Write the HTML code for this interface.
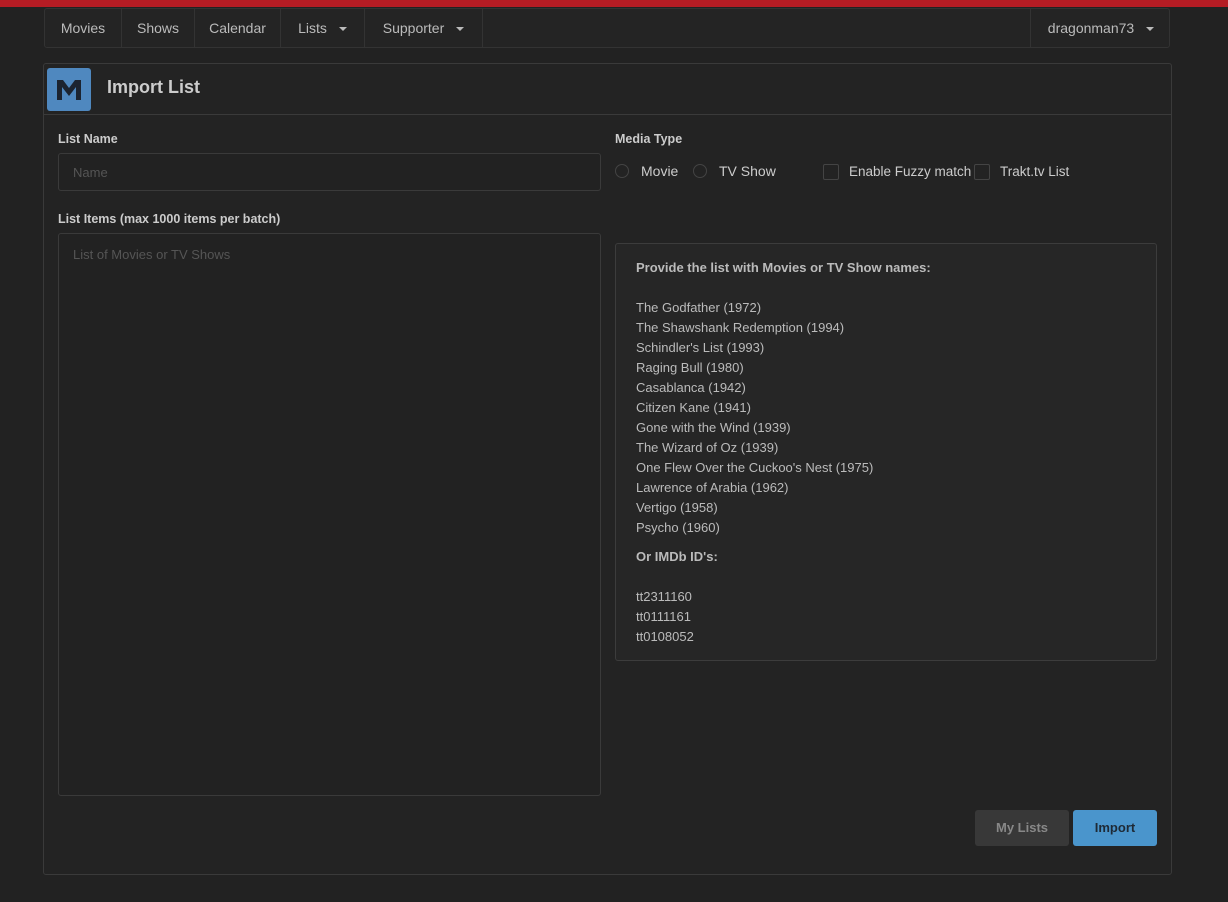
<!DOCTYPE html>
<html><head><style>
body{margin:0;width:1228px;height:902px;background:#222;font-family:"Liberation Sans",sans-serif;color:#ccc;position:relative;overflow:hidden;font-size:14px}
.a{position:absolute}
.top{left:0;top:0;width:1228px;height:7px;background:#b51c24}
.nav{left:44px;top:8px;width:1126px;height:40px;border:1px solid #333;border-radius:3px;background:#242424;box-sizing:border-box}
.ni{position:absolute;top:0;height:38px;line-height:38px;border-right:1px solid #333;text-align:center;color:#bbb;font-size:14px;box-sizing:border-box}
.car{display:inline-block;width:0;height:0;border-left:4px solid transparent;border-right:4px solid transparent;border-top:4px solid #bbb;margin-left:12px;vertical-align:middle}
.panel{left:43px;top:63px;width:1129px;height:812px;border:1px solid #3a3a3a;border-radius:3px;box-sizing:border-box;background:#232323}
.hdr{left:44px;top:64px;width:1127px;height:50px;border-bottom:1px solid #3a3a3a}
.lbl{font-weight:bold;font-size:12.5px;color:#ccc}
.inp{border:1px solid #3a3a3a;border-radius:3px;background:#222;box-sizing:border-box;color:#555;font-size:13px}
.rad{width:14px;height:14px;border:1px solid #444;border-radius:50%;box-sizing:border-box}
.chk{width:16px;height:16px;border:1px solid #444;border-radius:2px;box-sizing:border-box}
.info{left:615px;top:243px;width:542px;height:418px;border:1px solid #3c3c3c;border-radius:3px;background:#262626;box-sizing:border-box;padding:14px 20px;font-size:13px;line-height:20px;color:#bbb}
.btn{top:810px;height:36px;line-height:36px;border-radius:3px;text-align:center;font-weight:bold;font-size:13px}
</style></head><body>
<div class="a top"></div>
<div class="a nav">
<div class="ni" style="left:0;width:77px">Movies</div>
<div class="ni" style="left:77px;width:73px">Shows</div>
<div class="ni" style="left:150px;width:86px">Calendar</div>
<div class="ni" style="left:236px;width:84px">Lists<span class="car"></span></div>
<div class="ni" style="left:320px;width:118px">Supporter<span class="car"></span></div>
<div class="ni" style="left:985px;width:141px;border-right:none;border-left:1px solid #333">dragonman73<span class="car"></span></div>
</div>
<div class="a panel"></div>
<div class="a hdr"></div>
<div class="a" style="left:47px;top:68px;width:44px;height:43px;background:#4f88bf;border-radius:3px">
<svg width="44" height="43" viewBox="0 0 44 43"><path d="M10 32V12h6l6 8 6-8h6v20h-5V19l-7 9-7-9v13z" fill="#1c2430"/></svg></div>
<div class="a" style="left:107px;top:77px;font-size:18px;font-weight:bold;color:#ccc">Import List</div>
<div class="a lbl" style="left:58px;top:132px">List Name</div>
<div class="a inp" style="left:58px;top:153px;width:543px;height:38px;padding:11px 14px">Name</div>
<div class="a lbl" style="left:58px;top:212px">List Items (max 1000 items per batch)</div>
<div class="a inp" style="left:58px;top:233px;width:543px;height:563px;padding:13px 14px">List of Movies or TV Shows</div>
<div class="a lbl" style="left:615px;top:132px">Media Type</div>
<div class="a rad" style="left:615px;top:164px"></div>
<div class="a" style="left:641px;top:163px">Movie</div>
<div class="a rad" style="left:693px;top:164px"></div>
<div class="a" style="left:719px;top:163px">TV Show</div>
<div class="a chk" style="left:823px;top:164px"></div>
<div class="a" style="left:849px;top:164px;font-size:13.5px">Enable Fuzzy match</div>
<div class="a chk" style="left:974px;top:164px"></div>
<div class="a" style="left:1000px;top:164px;font-size:13.5px">Trakt.tv List</div>
<div class="a info"><b>Provide the list with Movies or TV Show names:</b><br><br>The Godfather (1972)<br>The Shawshank Redemption (1994)<br>Schindler's List (1993)<br>Raging Bull (1980)<br>Casablanca (1942)<br>Citizen Kane (1941)<br>Gone with the Wind (1939)<br>The Wizard of Oz (1939)<br>One Flew Over the Cuckoo's Nest (1975)<br>Lawrence of Arabia (1962)<br>Vertigo (1958)<br>Psycho (1960)<div style="height:9px"></div><b>Or IMDb ID's:</b><br><br>tt2311160<br>tt0111161<br>tt0108052</div>
<div class="a btn" style="left:975px;width:94px;background:#383838;color:#888">My Lists</div>
<div class="a btn" style="left:1073px;width:84px;background:#4a95cc;color:#1e2a36">Import</div>
</body></html>
